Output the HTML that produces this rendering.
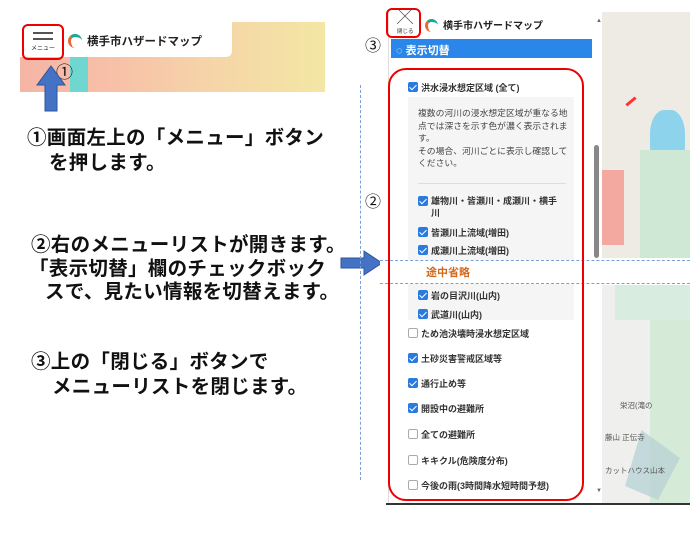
<!DOCTYPE html>
<html><head><meta charset="utf-8"><style>
*{margin:0;padding:0;box-sizing:border-box}
body{width:690px;height:544px;background:#fff;position:relative;overflow:hidden;font-family:"Liberation Sans","Noto Sans CJK JP",sans-serif}
.a{position:absolute}
.big{font-size:19.5px;font-weight:bold;color:#111;white-space:nowrap;letter-spacing:0.3px}
.cb{position:absolute;width:10px;height:10px;border-radius:2px;background:#2a7be0}
.cb::after{content:"";position:absolute;left:3px;top:1px;width:3px;height:6px;border:solid #fff;border-width:0 1.5px 1.5px 0;transform:rotate(45deg)}
.cu{position:absolute;width:10px;height:10px;border-radius:2px;border:1px solid #aaa;background:#fff}
.it{position:absolute;font-size:9px;font-weight:bold;color:#333;white-space:nowrap}
.circ{position:absolute;font-size:16px;color:#111;}
</style></head><body>
<div class="a" style="left:20px;top:22px;width:305px;height:70px;background:linear-gradient(90deg,#f5b5a5 0%,#f7c0a8 30%,#f6d3a8 60%,#f3e7a4 100%)"></div>
<div class="a" style="left:70px;top:55px;width:18px;height:37px;background:#6fd6d0"></div>
<div class="a" style="left:20px;top:22px;width:212px;height:35px;background:#fff;border-radius:0 0 6px 0"></div>
<div class="a" style="left:22px;top:24px;width:42px;height:36px;border:2.5px solid #e00;border-radius:6px"></div>
<div class="a" style="left:33px;top:32px;width:20px;height:1.5px;background:#555"></div>
<div class="a" style="left:33px;top:38px;width:20px;height:1.5px;background:#555"></div>
<div class="a" style="left:31px;top:43px;font-size:6px;color:#222">メニュー</div>
<div class="a" style="left:68px;top:34px;width:14px;height:14px;border-radius:50%;border-top:3px solid #1a9;border-left:3px solid #e63"></div>
<div class="a" style="left:87px;top:33px;font-size:11.5px;font-weight:bold;color:#222">横手市ハザードマップ</div>
<div class="circ" style="left:56px;top:58px;font-size:17px">①</div>
<svg class="a" style="left:36px;top:65px" width="30" height="48"><polygon points="15,1 29,20 21,20 21,46 9,46 9,20 1,20" fill="#4472c4" stroke="#2f5597"/></svg>
<div class="a big" style="left:27px;top:121px">①画面左上の「メニュー」ボタン</div>
<div class="a big" style="left:49px;top:146px">を押します。</div>
<div class="a big" style="left:31px;top:228px">②右のメニューリストが開きます。</div>
<div class="a big" style="left:29px;top:252px">「表示切替」欄のチェックボック</div>
<div class="a big" style="left:45px;top:275px">スで、見たい情報を切替えます。</div>
<div class="a big" style="left:31px;top:345px">③上の「閉じる」ボタンで</div>
<div class="a big" style="left:52px;top:370px">メニューリストを閉じます。</div>
<svg class="a" style="left:340px;top:250px" width="44" height="26"><polygon points="1,8 24,8 24,1 42,13 24,25 24,18 1,18" fill="#4472c4" stroke="#2f5597"/></svg>
<div class="a" style="left:360px;top:85px;height:395px;border-left:1px dashed #7ba0d8"></div>
<div class="circ" style="left:365px;top:32px">③</div>
<div class="circ" style="left:365px;top:188px">②</div>
<div class="a" style="left:602px;top:12px;width:88px;height:246px;background:#eeeae4"></div>
<div class="a" style="left:650px;top:110px;width:35px;height:60px;background:#8dd3ec;border-radius:40%"></div>
<div class="a" style="left:640px;top:150px;width:50px;height:108px;background:#cfe8d6"></div>
<div class="a" style="left:602px;top:170px;width:22px;height:75px;background:#f4a9a0"></div>
<div class="a" style="left:625px;top:100px;width:12px;height:3px;background:#f33;transform:rotate(-40deg)"></div>
<div class="a" style="left:602px;top:285px;width:88px;height:218px;background:#efefed"></div>
<div class="a" style="left:615px;top:285px;width:75px;height:35px;background:#d8ecdf"></div>
<div class="a" style="left:650px;top:320px;width:40px;height:183px;background:#d5ebd8"></div>
<div class="a" style="left:625px;top:430px;width:55px;height:70px;background:#b9d3d6;opacity:.8;clip-path:polygon(30% 0,100% 40%,60% 100%,0 80%)"></div>
<div class="a" style="left:620px;top:400px;font-size:7.5px;color:#555">栄沼(滝の</div>
<div class="a" style="left:605px;top:432px;font-size:7.5px;color:#555">藤山 正伝寺</div>
<div class="a" style="left:605px;top:465px;font-size:7.5px;color:#555">カットハウス山本</div>
<div class="a" style="left:388px;top:12px;width:214px;height:492px;background:#fff;border-left:1px solid #ddd"></div>
<div class="a" style="left:386px;top:8px;width:35px;height:30px;border:2.5px solid #e00;border-radius:6px"></div>
<div class="a" style="left:397px;top:10px;font-size:16px;color:#444;line-height:16px">╳</div>
<div class="a" style="left:397px;top:27px;font-size:5.5px;color:#333">閉じる</div>
<div class="a" style="left:425px;top:19px;width:13px;height:13px;border-radius:50%;border-top:3px solid #1a9;border-left:3px solid #e63"></div>
<div class="a" style="left:443px;top:17px;font-size:10px;font-weight:bold;color:#222">横手市ハザードマップ</div>
<div class="a" style="left:391px;top:39px;width:201px;height:19px;background:#2a86e8"></div>
<div class="a" style="left:396px;top:42px;font-size:11px;font-weight:bold;color:#fff">◌ 表示切替</div>
<div class="a" style="left:594px;top:145px;width:5px;height:113px;background:#888;border-radius:3px"></div>
<div class="a" style="left:596px;top:18px;font-size:6px;color:#666">▲</div>
<div class="a" style="left:596px;top:488px;font-size:6px;color:#666">▼</div>
<div class="a" style="left:408px;top:97px;width:166px;height:223px;background:#f5f5f5"></div>
<div class="a" style="left:418px;top:183px;width:148px;border-top:1px solid #ddd"></div>
<div class="cb" style="left:408px;top:82px"></div><div class="it" style="left:421px;top:81px">洪水浸水想定区域 (全て)</div>
<div class="a" style="left:418px;top:107px;font-size:8.8px;color:#444;line-height:12.5px;width:152px">複数の河川の浸水想定区域が重なる地点では深さを示す色が濃く表示されます。<br>その場合、河川ごとに表示し確認してください。</div>
<div class="cb" style="left:418px;top:196px"></div><div class="it" style="left:431px;top:195px;line-height:12px">雄物川・皆瀬川・成瀬川・横手<br>川</div>
<div class="cb" style="left:418px;top:227px"></div><div class="it" style="left:431px;top:226px">皆瀬川上流域(増田)</div>
<div class="cb" style="left:418px;top:245px"></div><div class="it" style="left:431px;top:244px">成瀬川上流域(増田)</div>
<div class="a" style="left:380px;top:260px;width:310px;height:24px;background:#fff;border-top:1px dashed #7ba0d8;border-bottom:1px dashed #7ba0d8"></div>
<div class="a" style="left:426px;top:264px;font-size:11px;font-weight:bold;color:#d2691e">途中省略</div>
<div class="cb" style="left:418px;top:290px"></div><div class="it" style="left:431px;top:289px">岩の目沢川(山内)</div>
<div class="cb" style="left:418px;top:309px"></div><div class="it" style="left:431px;top:308px">武道川(山内)</div>
<div class="cu" style="left:408px;top:328px"></div><div class="it" style="left:421px;top:327px">ため池決壊時浸水想定区域</div>
<div class="cb" style="left:408px;top:353px"></div><div class="it" style="left:421px;top:352px">土砂災害警戒区域等</div>
<div class="cb" style="left:408px;top:378px"></div><div class="it" style="left:421px;top:377px">通行止め等</div>
<div class="cb" style="left:408px;top:403px"></div><div class="it" style="left:421px;top:402px">開設中の避難所</div>
<div class="cu" style="left:408px;top:429px"></div><div class="it" style="left:421px;top:428px">全ての避難所</div>
<div class="cu" style="left:408px;top:455px"></div><div class="it" style="left:421px;top:454px">キキクル(危険度分布)</div>
<div class="cu" style="left:408px;top:480px"></div><div class="it" style="left:421px;top:479px">今後の雨(3時間降水短時間予想)</div>
<div class="a" style="left:388px;top:68px;width:196px;height:433px;border:2.5px solid #e00;border-radius:18px"></div>
<div class="a" style="left:386px;top:503px;width:304px;height:2px;background:#333"></div>
</body></html>
